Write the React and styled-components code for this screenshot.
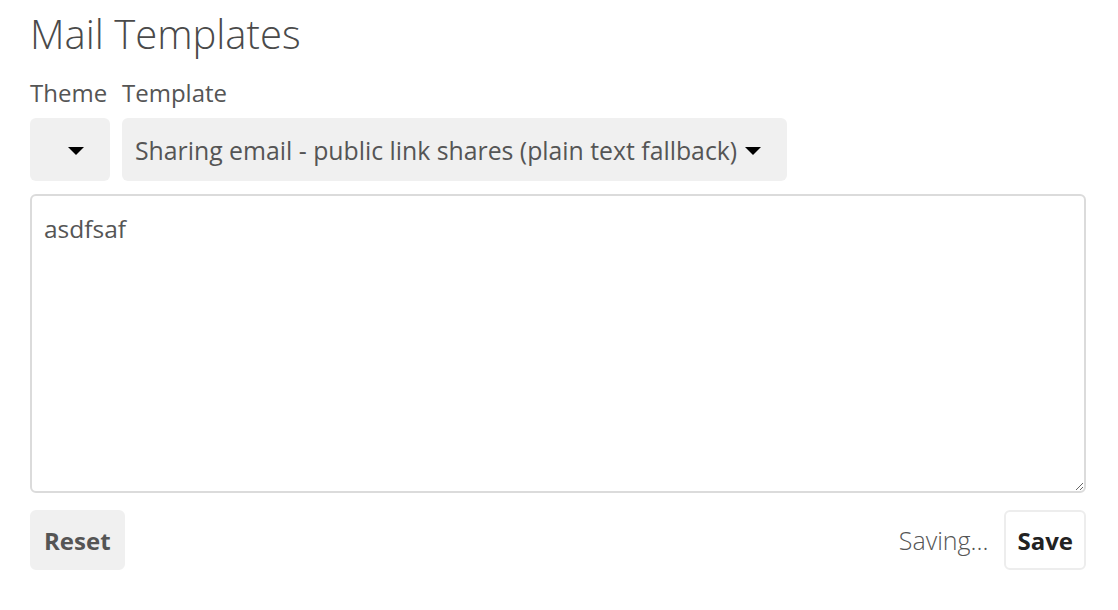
import styled, { createGlobalStyle } from "styled-components";

const GlobalStyle = createGlobalStyle`
  html, body {
    margin: 0;
    padding: 0;
    background: #ffffff;
  }
  body {
    font-family: "Open Sans", "Noto Sans", sans-serif;
    color: #555555;
  }
`;

const Page = styled.div`
  padding: 9px 32px 0 30px;
  width: 1056px;
`;

const Title = styled.h2`
  margin: 0;
  font-size: 40px;
  line-height: 50px;
  font-weight: 300;
  color: #4a4a4a;
`;

const Pickers = styled.div`
  display: flex;
  gap: 12px;
  margin-top: 19px;
`;

const Field = styled.div`
  display: flex;
  flex-direction: column;
  gap: 10px;
`;

const Label = styled.label`
  font-size: 24px;
  line-height: 30px;
  color: #555555;
`;

const Select = styled.button`
  display: flex;
  align-items: center;
  gap: 8px;
  height: 63px;
  width: ${(p) => (p.$wide ? "auto" : "80px")};
  padding: ${(p) => (p.$wide ? "0 26px 0 13px" : "0 0 0 12px")};
  justify-content: ${(p) => (p.$wide ? "flex-start" : "center")};
  border: none;
  border-radius: 6px;
  background: #f0f0f0;
  font-family: inherit;
  font-size: 24.8px;
  color: #555555;
  cursor: pointer;
`;

const Caret = styled.span`
  width: 0;
  height: 0;
  border-left: 8px solid transparent;
  border-right: 8px solid transparent;
  border-top: 8px solid #000000;
  margin-top: 2px;
`;

const Editor = styled.textarea`
  display: block;
  box-sizing: border-box;
  width: 100%;
  height: 299px;
  margin-top: 13px;
  padding: 17px 12px 12px;
  border: 2px solid #dbdbdb;
  border-radius: 6px;
  font-family: inherit;
  font-size: 24.5px;
  line-height: 32px;
  color: #555555;
  resize: vertical;
  outline: none;
`;

const Footer = styled.div`
  display: flex;
  align-items: center;
  margin-top: 17px;
`;

const Button = styled.button`
  height: 60px;
  padding: 0 ${(p) => (p.$primary ? "11px" : "12px")};
  border-radius: 6px;
  border: 2px solid ${(p) => (p.$primary ? "#ededed" : "#f0f0f0")};
  background: ${(p) => (p.$primary ? "#ffffff" : "#f0f0f0")};
  color: ${(p) => (p.$primary ? "#222222" : "#555555")};
  font-family: inherit;
  font-size: 24px;
  font-weight: 700;
  cursor: pointer;
`;

const Status = styled.span`
  margin-left: auto;
  margin-right: 16px;
  font-size: 25px;
  font-weight: 300;
  color: #555555;
`;

export default function App() {
  return (
    <>
      <GlobalStyle />
      <Page>
        <Title>Mail Templates</Title>
        <Pickers>
          <Field>
            <Label>Theme</Label>
            <Select>
              <Caret />
            </Select>
          </Field>
          <Field>
            <Label>Template</Label>
            <Select $wide>
              Sharing email - public link shares (plain text fallback)
              <Caret />
            </Select>
          </Field>
        </Pickers>
        <Editor defaultValue="asdfsaf" />
        <Footer>
          <Button>Reset</Button>
          <Status>Saving...</Status>
          <Button $primary>Save</Button>
        </Footer>
      </Page>
    </>
  );
}
